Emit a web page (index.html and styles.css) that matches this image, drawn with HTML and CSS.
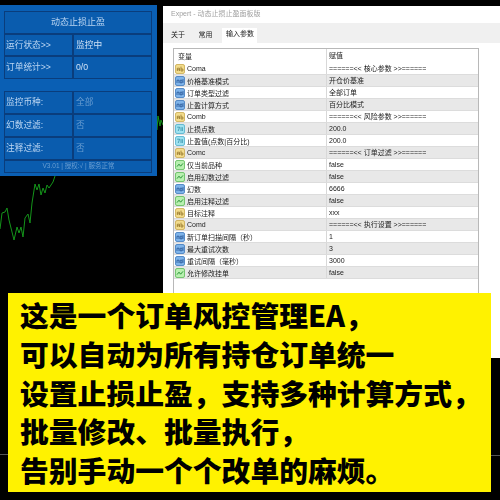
FILE: index.html
```html
<!DOCTYPE html>
<html lang="zh">
<head>
<meta charset="utf-8">
<title>动态止损止盈</title>
<link rel="stylesheet" href="styles.css">
</head>
<body>
<svg class="chart" width="170" height="300" viewBox="0 0 170 300">
  <polyline class="trace" points="0,229 2,213 5,212 7,208 9,220 14,240 17,227 19,233 21,227 23,237 25,218 28,214 30,223 32,203 35,184 37,190 39,184 41,195 43,188 45,193 47,185 49,188 53,182 55,176"/>
  <polyline class="trace" points="157,130 158,116 160,126 161,120 163,125"/>
</svg>
<div class="rule rule-left"></div>
<div class="rule rule-right"></div>
<div class="strip-right"></div>

<section class="panel">
  <div class="cell title">动态止损止盈</div>
  <div class="cell label">运行状态&gt;&gt;</div><div class="cell value bright">监控中</div>
  <div class="cell label">订单统计&gt;&gt;</div><div class="cell value bright">0/0</div>
  <div class="spacer"></div>
  <div class="cell label big">监控币种:</div><div class="cell value dim">全部</div>
  <div class="cell label big">幻数过滤:</div><div class="cell value dim">否</div>
  <div class="cell label big">注释过滤:</div><div class="cell value dim">否</div>
  <div class="cell foot">V3.01 | 授权:√ | 服务正常</div>
</section>

<section class="dialog">
  <div class="titlebar">Expert - 动态止损止盈面板版</div>
  <div class="tabs">
    <span class="tab first">关于</span>
    <span class="tab">常用</span>
    <span class="tab active">输入参数</span>
  </div>
  <div class="content">
    <div class="table">
      <div class="thead"><span class="name">变量</span><span class="val">赋值</span></div>
      <div class="row"><svg class="ico" viewBox="0 0 10 10"><use href="#i-ab"/></svg><span class="name">Coma</span><span class="val">======&lt;&lt; 核心参数 &gt;&gt;======</span></div>
      <div class="row"><svg class="ico" viewBox="0 0 10 10"><use href="#i-num"/></svg><span class="name">价格基准模式</span><span class="val">开仓价基准</span></div>
      <div class="row"><svg class="ico" viewBox="0 0 10 10"><use href="#i-num"/></svg><span class="name">订单类型过滤</span><span class="val">全部订单</span></div>
      <div class="row"><svg class="ico" viewBox="0 0 10 10"><use href="#i-num"/></svg><span class="name">止盈计算方式</span><span class="val">百分比模式</span></div>
      <div class="row"><svg class="ico" viewBox="0 0 10 10"><use href="#i-ab"/></svg><span class="name">Comb</span><span class="val">======&lt;&lt; 风险参数 &gt;&gt;======</span></div>
      <div class="row"><svg class="ico" viewBox="0 0 10 10"><use href="#i-dbl"/></svg><span class="name">止损点数</span><span class="val">200.0</span></div>
      <div class="row"><svg class="ico" viewBox="0 0 10 10"><use href="#i-dbl"/></svg><span class="name">止盈值(点数|百分比)</span><span class="val">200.0</span></div>
      <div class="row"><svg class="ico" viewBox="0 0 10 10"><use href="#i-ab"/></svg><span class="name">Comc</span><span class="val">======&lt;&lt; 订单过滤 &gt;&gt;======</span></div>
      <div class="row"><svg class="ico" viewBox="0 0 10 10"><use href="#i-bool"/></svg><span class="name">仅当前品种</span><span class="val">false</span></div>
      <div class="row"><svg class="ico" viewBox="0 0 10 10"><use href="#i-bool"/></svg><span class="name">启用幻数过滤</span><span class="val">false</span></div>
      <div class="row"><svg class="ico" viewBox="0 0 10 10"><use href="#i-num"/></svg><span class="name">幻数</span><span class="val">6666</span></div>
      <div class="row"><svg class="ico" viewBox="0 0 10 10"><use href="#i-bool"/></svg><span class="name">启用注释过滤</span><span class="val">false</span></div>
      <div class="row"><svg class="ico" viewBox="0 0 10 10"><use href="#i-ab"/></svg><span class="name">目标注释</span><span class="val">xxx</span></div>
      <div class="row"><svg class="ico" viewBox="0 0 10 10"><use href="#i-ab"/></svg><span class="name">Comd</span><span class="val">======&lt;&lt; 执行设置 &gt;&gt;======</span></div>
      <div class="row"><svg class="ico" viewBox="0 0 10 10"><use href="#i-num"/></svg><span class="name">新订单扫描间隔（秒）</span><span class="val">1</span></div>
      <div class="row"><svg class="ico" viewBox="0 0 10 10"><use href="#i-num"/></svg><span class="name">最大重试次数</span><span class="val">3</span></div>
      <div class="row"><svg class="ico" viewBox="0 0 10 10"><use href="#i-num"/></svg><span class="name">重试间隔（毫秒）</span><span class="val">3000</span></div>
      <div class="row"><svg class="ico" viewBox="0 0 10 10"><use href="#i-bool"/></svg><span class="name">允许修改挂单</span><span class="val">false</span></div>
    </div>
  </div>
</section>

<section class="banner">
  <p>这是一个订单风控管理EA，</p>
  <p>可以自动为所有持仓订单统一</p>
  <p>设置止损止盈，支持多种计算方式，</p>
  <p>批量修改、批量执行，</p>
  <p>告别手动一个个改单的麻烦。</p>
</section>

<svg class="defs" width="0" height="0">
  <defs>
    <g id="i-ab"><rect x=".5" y=".5" width="9" height="9" rx="1.5" fill="#f3dc8c" stroke="#c9a94c" stroke-width=".8"/><path d="M2.3 7V4.2h2.2V7M2.3 5.8h2.2M6 2.6V7h1.9V5H6" fill="none" stroke="#8a6a20" stroke-width=".7"/></g>
    <g id="i-num"><rect x=".5" y=".5" width="9" height="9" rx="1.5" fill="#7fb4ea" stroke="#3c78bd" stroke-width=".8"/><path d="M2 7V4.2h2V7M5.2 4.2H7v2.6H5.2zM8 3v4" fill="none" stroke="#1c4a8c" stroke-width=".7"/></g>
    <g id="i-dbl"><rect x=".5" y=".5" width="9" height="9" rx="1.5" fill="#9fe2f0" stroke="#4eaecb" stroke-width=".8"/><path d="M2.2 3.2h2.4L3.2 7M6 3.2v3.8M7.4 3.2V7" fill="none" stroke="#2a86a0" stroke-width=".7"/></g>
    <g id="i-bool"><rect x=".5" y=".5" width="9" height="9" rx="1.5" fill="#b8f0b0" stroke="#5cba58" stroke-width=".8"/><path d="M2 6.6 4 4.2l1.6 2L8 3.4" fill="none" stroke="#1c8a2c" stroke-width=".9"/></g>
  </defs>
</svg>
</body>
</html>
```
FILE: styles.css
```css
* { box-sizing: border-box; }
html, body { margin: 0; padding: 0; }
body {
  width: 500px; height: 500px; position: relative; overflow: hidden;
  background: #000;
  font-family: "Liberation Sans", "Noto Sans CJK SC", sans-serif;
}
.defs { position: absolute; }
.chart { position: absolute; left: 0; top: 0; }
.trace { fill: none; stroke: #14941a; stroke-width: 1; }
.rule { position: absolute; height: 1px; background: #555; }
.rule-left { left: 0; top: 454px; width: 8px; }
.rule-right { left: 491px; top: 455px; width: 9px; }
.strip-right {
  position: absolute; left: 484px; top: 292px; width: 16px; height: 66px;
  background: linear-gradient(#e2e2e2 0 16px, #fff 16px 25px, #e2e2e2 25px 41px, #fff 41px 45px, #e2e2e2 45px 60px, #fff 60px 66px);
}

/* left panel */
.panel {
  position: absolute; left: 0; top: 5px; width: 157px; height: 171px;
  background: #0a5fb4; padding: 6px 5px 4px 4px;
  display: grid;
  grid-template-columns: 69px 79px;
  grid-template-rows: 23px 22px 23px 12px 23px 23px 23px 13px;
  filter: blur(.3px);
}
.cell {
  border: 1px solid #0a3d7c; background: #0a5cae;
  display: flex; align-items: center; padding-left: 1px;
  font-size: 8.7px; color: #bcd6f2; line-height: 1;
}
.title { grid-column: 1 / 3; justify-content: center; font-size: 9px; padding-left: 0; }
.value { padding-left: 2px; }
.bright { color: #d0e2f6; }
.dim { color: #6a9ed2; }
.spacer { grid-column: 1 / 3; }
.foot { grid-column: 1 / 3; justify-content: center; font-size: 6.5px; color: #6a9ed2; }

/* dialog */
.dialog {
  position: absolute; left: 163px; top: 6px; width: 337px; height: 352px;
  background: #fff; display: flex; flex-direction: column;
}
.titlebar { flex: none; height: 17px; padding: 2px 0 0 8px; font-size: 7px; line-height: 12px; color: #a0a0a0; filter: blur(.3px); }
.tabs {
  flex: none; height: 20px; background: #f0f0f0; display: flex; align-items: flex-end;
  padding-left: 2px; font-size: 7px; color: #222;
}
.tab { height: 14px; width: 27.5px; line-height: 12px; padding-left: 6px; white-space: nowrap; filter: blur(.2px); }
.tab.active { width: 35px; margin-left: 2px; background: #fff; padding-left: 4px; height: 15px; }
.content { flex: 1; min-height: 0; padding: 5px 0 0 10px; overflow: hidden; }
.table { width: 306px; height: 400px; border: 1px solid #b8b8b8; border-bottom: 0; }
.thead { height: 14px; display: flex; align-items: center; font-size: 7px; color: #222; }
.thead .name { width: 152px; padding-left: 4px; }
.thead .val { border-left: 1px solid #d8d8d8; height: 100%; padding-left: 2px; }
.thead span { line-height: 13px; filter: blur(.2px); }
.row {
  height: 12px; display: flex; align-items: center; font-size: 7px; color: #222;
  background: #fff; border-bottom: 1px solid #dcdcdc;
}
.row:nth-child(odd) { background: #e8e8e8; }
.ico { width: 10px; height: 10px; margin-left: 1px; flex: none; }
.row .name { width: 141px; padding-left: 2px; white-space: nowrap; filter: blur(.2px); }
.row .val { flex: 1; height: 100%; line-height: 11px; border-left: 1px solid #d8d8d8; padding-left: 2px; white-space: nowrap; filter: blur(.2px); }

/* banner */
.banner {
  position: absolute; left: 8px; top: 293px; width: 483px; height: 199px;
  background: #fff200; padding: 3px 0 0 12px;
  display: flex; flex-direction: column;
  font-family: "Noto Sans CJK SC", sans-serif;
}
.banner p {
  margin: 0; flex: none; height: 38.75px; line-height: 38px; font-size: 28.8px; font-weight: 900;
  color: #000; white-space: nowrap;
}
```
